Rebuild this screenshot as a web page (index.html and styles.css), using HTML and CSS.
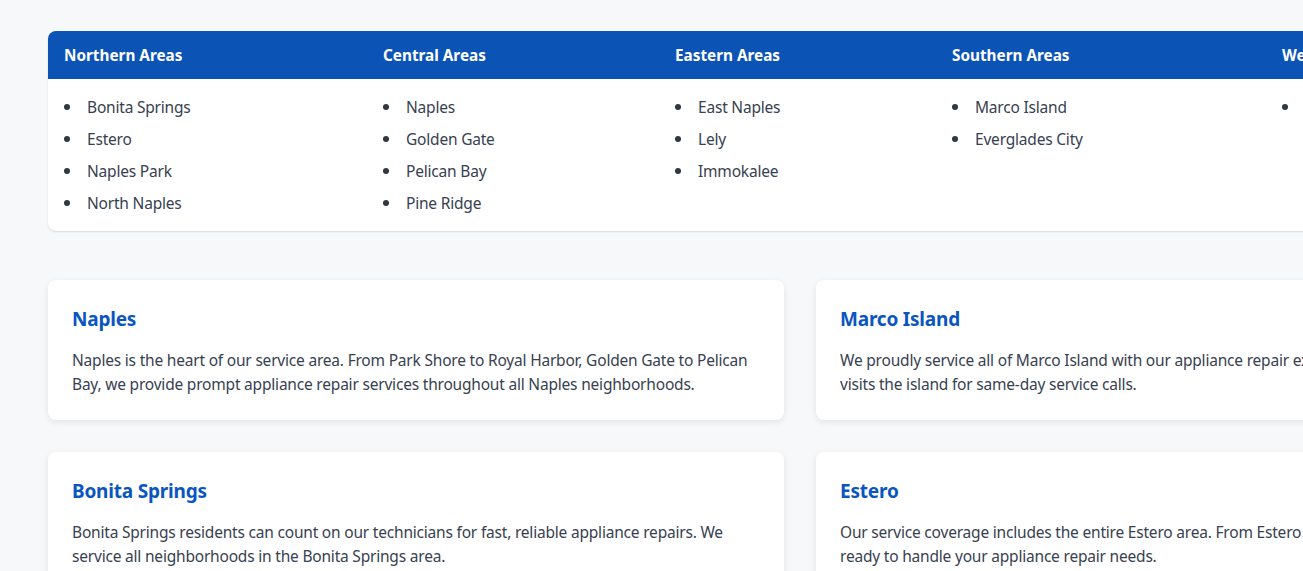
FILE: index.html
```html
<!DOCTYPE html>
<html lang="en">
<head>
<meta charset="utf-8">
<title>Service Areas</title>
<link rel="stylesheet" href="styles.css">
</head>
<body>
<main class="container">
  <table class="areas">
    <colgroup>
      <col class="c1"><col class="c2"><col class="c3"><col class="c4"><col class="c5">
    </colgroup>
    <thead>
      <tr>
        <th>Northern Areas</th>
        <th>Central Areas</th>
        <th>Eastern Areas</th>
        <th>Southern Areas</th>
        <th>Western Areas</th>
      </tr>
    </thead>
    <tbody>
      <tr>
        <td><ul><li>Bonita Springs</li><li>Estero</li><li>Naples Park</li><li>North Naples</li></ul></td>
        <td><ul><li>Naples</li><li>Golden Gate</li><li>Pelican Bay</li><li>Pine Ridge</li></ul></td>
        <td><ul><li>East Naples</li><li>Lely</li><li>Immokalee</li></ul></td>
        <td><ul><li>Marco Island</li><li>Everglades City</li></ul></td>
        <td><ul><li>Vanderbilt Beach</li></ul></td>
      </tr>
    </tbody>
  </table>

  <section class="cards">
    <article class="card">
      <h3>Naples</h3>
      <p>Naples is the heart of our service area. From Park Shore to Royal Harbor, Golden Gate to Pelican Bay, we provide prompt appliance repair services throughout all Naples neighborhoods.</p>
    </article>
    <article class="card">
      <h3>Marco Island</h3>
      <p>We proudly service all of Marco Island with our appliance repair expertise. Our team regularly visits the island for same-day service calls.</p>
    </article>
    <article class="card">
      <h3>Bonita Springs</h3>
      <p>Bonita Springs residents can count on our technicians for fast, reliable appliance repairs. We service all neighborhoods in the Bonita Springs area.</p>
    </article>
    <article class="card">
      <h3>Estero</h3>
      <p>Our service coverage includes the entire Estero area. From Estero Bay to Corkscrew Road, we are ready to handle your appliance repair needs.</p>
    </article>
  </section>
</main>
</body>
</html>
```
FILE: styles.css
```css
html, body {
  overflow: hidden;
}
body {
  margin: 0;
  background: #f7f8fa;
  font-family: "Noto Sans", "Open Sans", sans-serif;
  color: #374151;
  font-size: 16px;
}
.container {
  width: 1504px;
  padding: 31px 48px 40px;
}
.areas {
  width: 1504px;
  table-layout: fixed;
  border-collapse: separate;
  border-spacing: 0;
  background: #fff;
  border-radius: 8px;
  overflow: hidden;
  box-shadow: 0 1px 2px rgba(0,0,0,0.12);
  margin-bottom: 49px;
}
.c1 { width: 319px; }
.c2 { width: 292px; }
.c3 { width: 277px; }
.c4 { width: 330px; }
.c5 { width: 286px; }
.areas th {
  background: #0b53b5;
  color: #fff;
  text-align: left;
  font-size: 15.3px;
  font-weight: 700;
  line-height: 24px;
  padding: 12px 16px;
}
.areas td {
  vertical-align: top;
  padding: 16px 16px;
}
.areas ul {
  margin: 0;
  padding: 0;
  list-style: none;
}
.areas li {
  display: flex;
  align-items: center;
  line-height: 24px;
  margin-bottom: 8px;
  font-size: 15.5px;
  letter-spacing: -0.2px;
}
.areas li::before {
  content: "";
  flex: none;
  width: 6px;
  height: 6px;
  border-radius: 50%;
  background: #2f3644;
  margin-right: 17px;
}
.areas li:last-child { margin-bottom: 0; }
.cards {
  display: grid;
  grid-template-columns: 736px 736px;
  gap: 32px;
}
.card {
  background: #fff;
  border-radius: 8px;
  box-shadow: 0 2px 6px rgba(0,0,0,0.09);
  padding: 24px;
}
.card h3 {
  margin: 0 0 14px;
  color: #0a55c0;
  font-size: 19px;
  line-height: 30px;
  font-weight: 700;
  letter-spacing: -0.2px;
}
.card p {
  margin: 0;
  font-size: 15.5px;
  line-height: 24px;
  letter-spacing: -0.2px;
}
```
